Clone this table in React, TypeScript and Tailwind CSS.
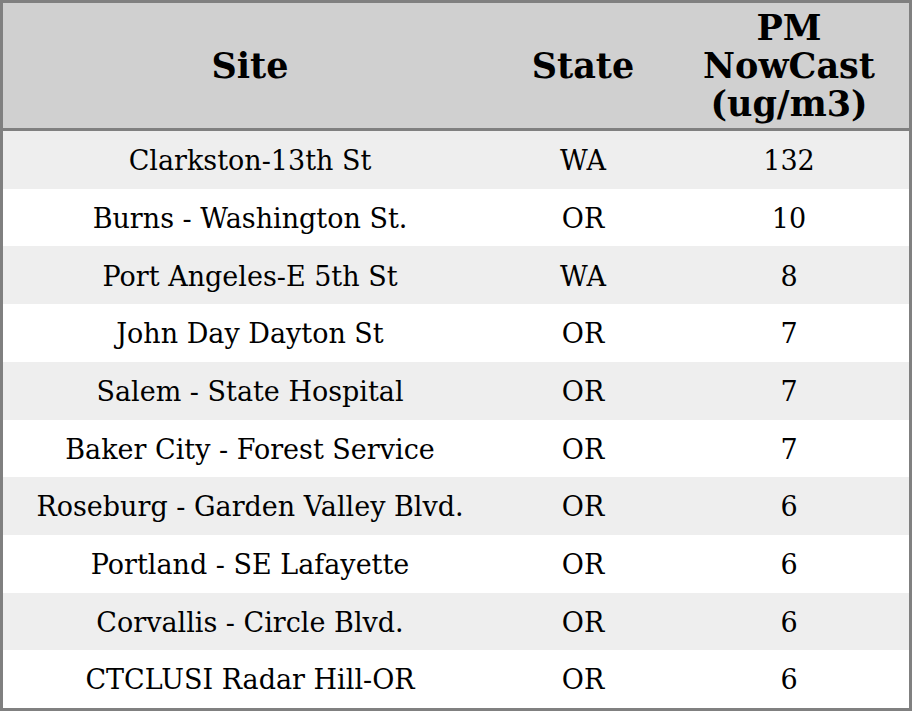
import React from 'react';

const rows = [
  ['Clarkston-13th St', 'WA', '132'],
  ['Burns - Washington St.', 'OR', '10'],
  ['Port Angeles-E 5th St', 'WA', '8'],
  ['John Day Dayton St', 'OR', '7'],
  ['Salem - State Hospital', 'OR', '7'],
  ['Baker City - Forest Service', 'OR', '7'],
  ['Roseburg - Garden Valley Blvd.', 'OR', '6'],
  ['Portland - SE Lafayette', 'OR', '6'],
  ['Corvallis - Circle Blvd.', 'OR', '6'],
  ['CTCLUSI Radar Hill-OR', 'OR', '6'],
];

export default function App() {
  return (
    <div className="w-[912px] h-[711px] border-[3px] border-[#808080] bg-white flex flex-col font-['DejaVu_Serif',serif] text-black">
      {/* Header */}
      <div className="h-[128px] shrink-0 grid grid-cols-[494px_172px_1fr] bg-[#d0d0d0] border-b-[3px] border-[#808080] text-[35px] font-bold leading-[38px]">
        <div className="flex items-center justify-center text-center">Site</div>
        <div className="flex items-center justify-center text-center">State</div>
        <div className="flex items-center justify-center text-center">
          PM<br />NowCast<br />(ug/m3)
        </div>
      </div>
      {/* Body */}
      <div className="flex-1 flex flex-col text-[27px]">
        {rows.map((r, i) => (
          <div
            key={i}
            className={`flex-1 grid grid-cols-[494px_172px_1fr] items-center text-center pt-[3px] ${i % 2 === 0 ? 'bg-[#eeeeee]' : 'bg-white'}`}
          >
            <div>{r[0]}</div>
            <div>{r[1]}</div>
            <div>{r[2]}</div>
          </div>
        ))}
      </div>
    </div>
  );
}
